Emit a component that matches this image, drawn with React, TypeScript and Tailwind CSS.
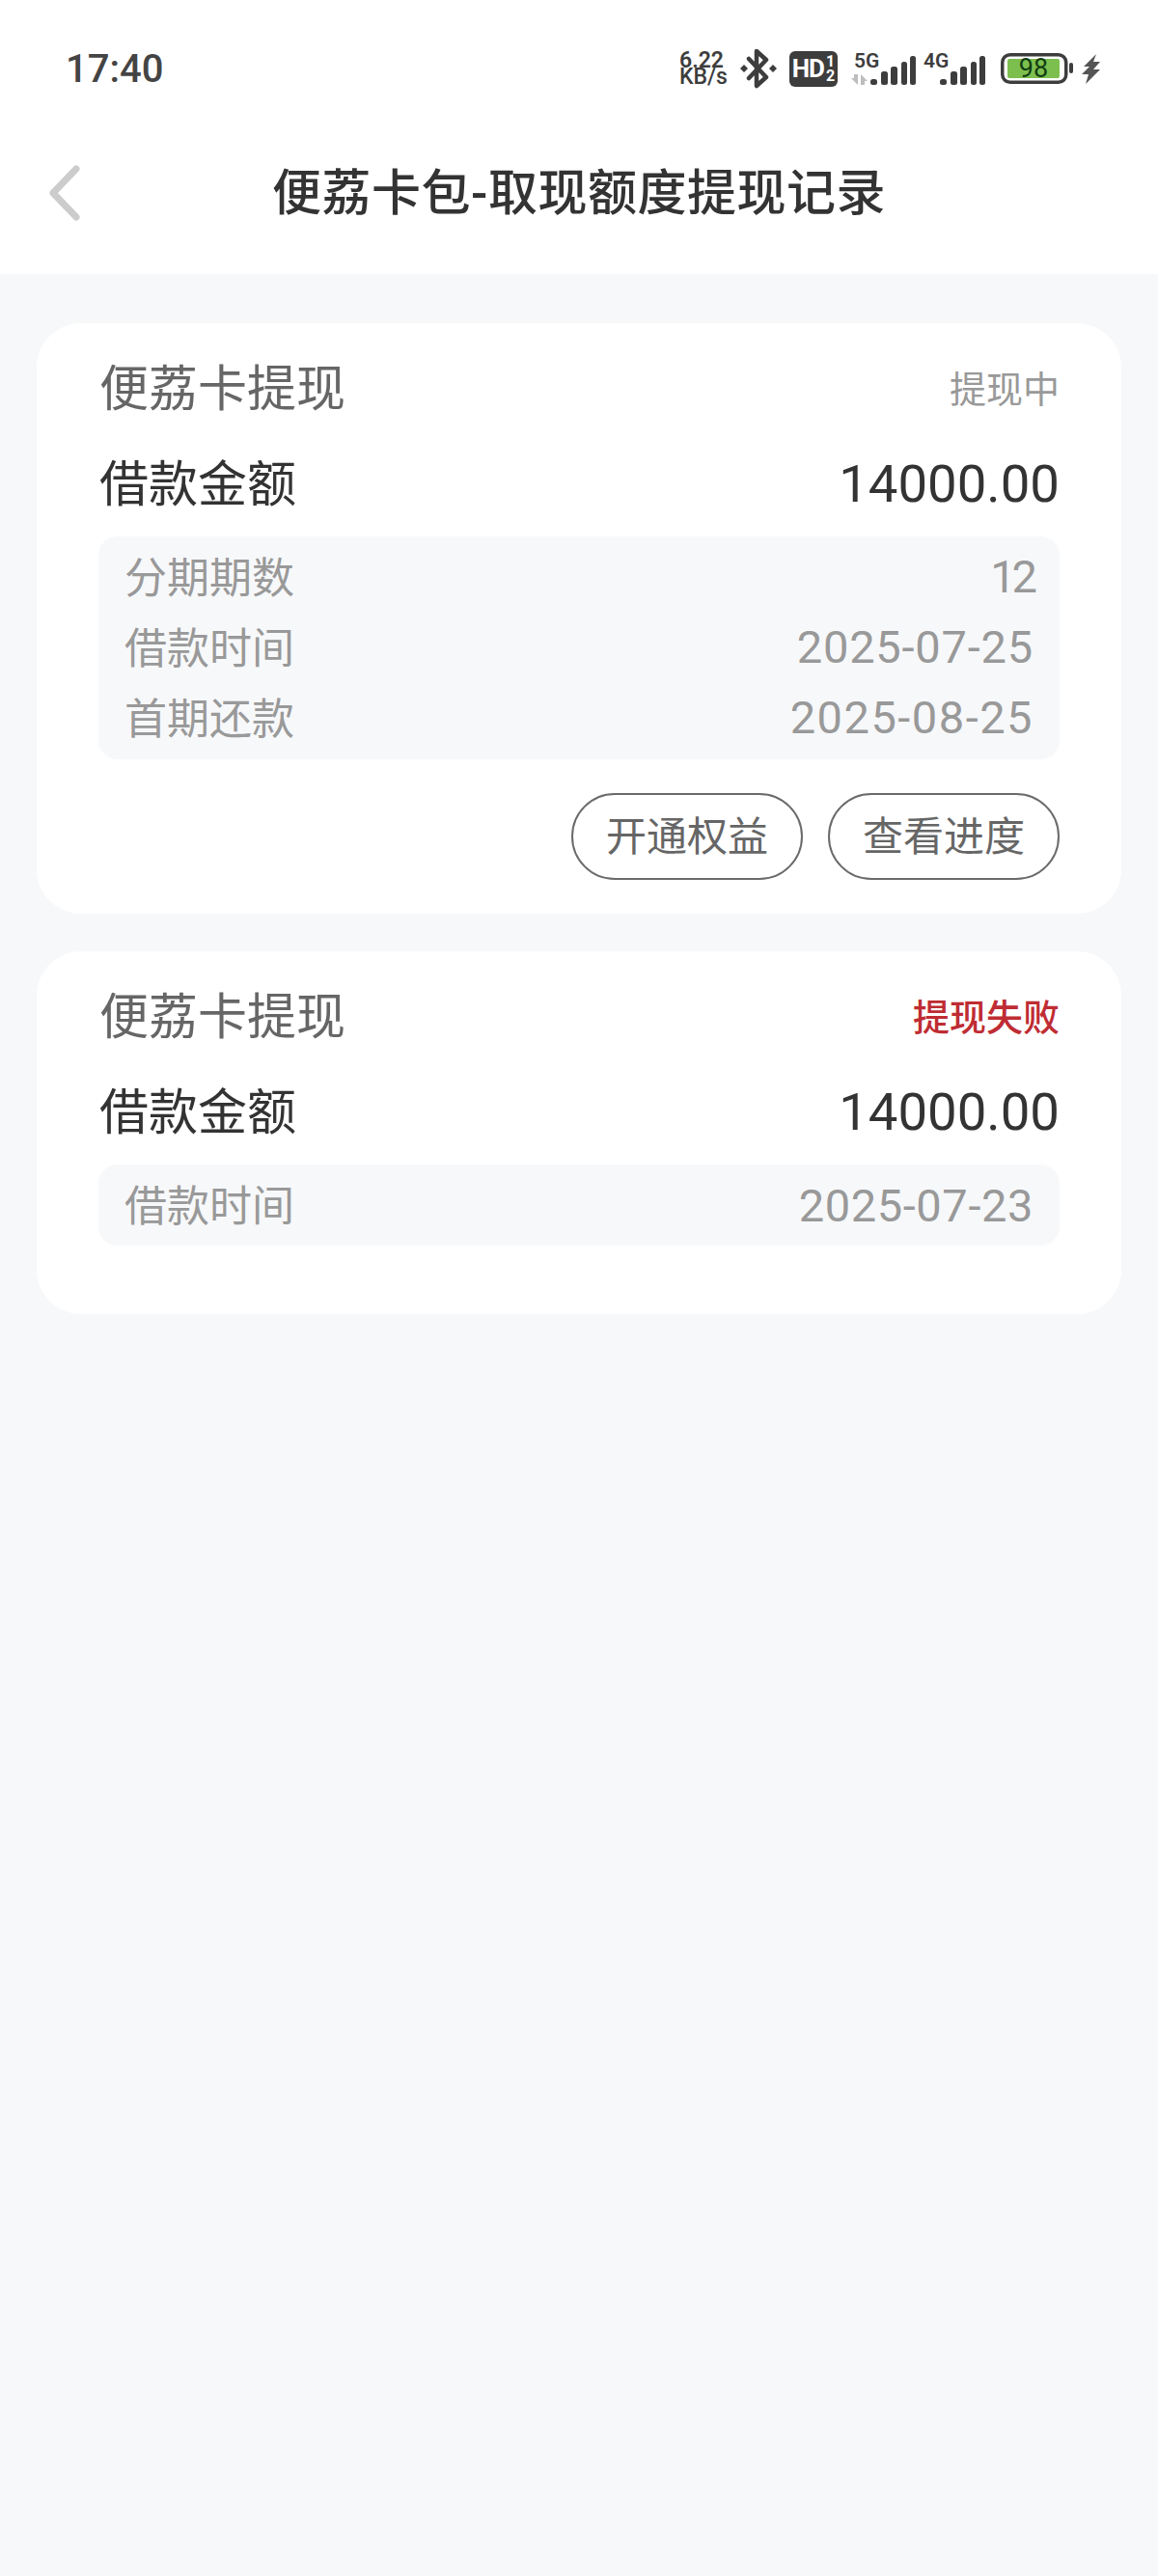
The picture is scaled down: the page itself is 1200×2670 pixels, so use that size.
import React from "react";

const bars = [
  [0, 24, 7, 6],
  [11, 16, 7, 14],
  [21, 11, 7, 19],
  [32, 6, 6, 24],
  [41, 0, 6, 30],
];

function SignalBars({ x }: { x: number }) {
  return (
    <g transform={`translate(${x} 7)`}>
      {bars.map(([bx, by, w, h]) => (
        <rect key={bx} x={bx} y={by} width={w} height={h} rx="2.5" fill="#3d3d3d" />
      ))}
    </g>
  );
}

function Signal5G() {
  return (
    <svg width="67" height="40" viewBox="0 0 67 40">
      <text x="3" y="19" fontSize="21" fontWeight="600" fill="#3d3d3d" fontFamily="Roboto, sans-serif">
        5G
      </text>
      <polygon points="0,30 3,30 3,26 7,26 7,37" fill="#bdbdbd" />
      <polygon points="10,37 10,26 17,33 14,33 14,37" fill="#bdbdbd" />
      <SignalBars x={20} />
    </svg>
  );
}

function Signal4G() {
  return (
    <svg width="65" height="40" viewBox="0 0 65 40">
      <text x="0" y="19" fontSize="21" fontWeight="600" fill="#3d3d3d" fontFamily="Roboto, sans-serif">
        4G
      </text>
      <SignalBars x={17} />
    </svg>
  );
}

function NetSpeed() {
  return (
    <svg width="56" height="46" viewBox="0 0 56 46">
      <text x="0" y="22" fontSize="23" fontWeight="600" fill="#3d3d3d" fontFamily="Roboto, sans-serif">
        6.22
      </text>
      <text x="0" y="39" fontSize="23" fontWeight="500" fill="#3d3d3d" fontFamily="Roboto, sans-serif">
        KB/s
      </text>
    </svg>
  );
}

function Bluetooth() {
  return (
    <svg width="38" height="42" viewBox="0 0 38 42">
      <path
        d="M9 11 L27 30 L17 39 L17 3 L27 12 L9 31"
        fill="none"
        stroke="#3d3d3d"
        strokeWidth="4.5"
        strokeLinejoin="round"
        strokeLinecap="round"
      />
      <polygon points="4,17 8,21 4,25 0,21" fill="#3d3d3d" />
      <polygon points="34,17 38,21 34,25 30,21" fill="#3d3d3d" />
    </svg>
  );
}

function Battery() {
  return (
    <svg width="75" height="32" viewBox="0 0 75 32">
      <rect x="1.75" y="1.75" width="66" height="28.5" rx="8" fill="#fff" stroke="#3d3d3d" strokeWidth="3.5" />
      <rect x="7" y="6" width="54" height="20" rx="2" fill="#7dbf4e" />
      <text x="34" y="25" textAnchor="middle" fontSize="27" fill="#123d12" fontFamily="Roboto, sans-serif">
        98
      </text>
      <rect x="71" y="10" width="4" height="11" rx="2" fill="#3d3d3d" />
    </svg>
  );
}

function Bolt() {
  return (
    <svg width="19" height="31" viewBox="0 0 19 31">
      <polygon points="15,0 2,13 8,13 0,21 7,21 4,31 19,16 12,16 19,8 12,8" fill="#555" />
    </svg>
  );
}

function StatusBar() {
  return (
    <div className="flex h-[142px] items-center pl-[68px] pr-[60px]">
      <span className="flex-1 pt-[2px] text-[40px] font-medium text-[#444444]">17:40</span>
      <div className="flex">
        <NetSpeed />
      </div>
      <div className="ml-[7px] flex">
        <Bluetooth />
      </div>
      <div className="ml-[13px] flex h-[37px] w-[50px] items-center justify-center rounded-[6px] bg-[#3d3d3d] text-white">
        <span className="text-[26px] font-bold leading-none tracking-[-1px]">HD</span>
        <span className="ml-[2px] flex flex-col text-[16px] font-bold leading-[15px]">
          <span>1</span>
          <span>2</span>
        </span>
      </div>
      <div className="ml-[14px] flex">
        <Signal5G />
      </div>
      <div className="ml-[8px] flex">
        <Signal4G />
      </div>
      <div className="ml-[15px] flex">
        <Battery />
      </div>
      <div className="ml-[9px] flex">
        <Bolt />
      </div>
    </div>
  );
}

function Header() {
  return (
    <div className="grid h-[142px] grid-cols-[1fr_auto_1fr] items-center pb-[26px]">
      <div className="pl-[50px]">
        <svg width="34" height="58" viewBox="0 0 34 58" className="block">
          <path
            d="M29 4 L5 29 L29 54"
            fill="none"
            stroke="#cccccc"
            strokeWidth="7"
            strokeLinecap="round"
            strokeLinejoin="round"
          />
        </svg>
      </div>
      <h1 className="text-[51px] font-medium leading-none tracking-[0.5px] text-[#333333]">
        便荔卡包-取现额度提现记录
      </h1>
      <div />
    </div>
  );
}

type Row = { label: string; value: string; valueClass: string };

function DetailRow({ row, height }: { row: Row; height: string }) {
  return (
    <div className={`flex items-center justify-between ${height}`}>
      <span className="pt-[4px] text-[44px] text-[#999999]">{row.label}</span>
      <span className={`pt-[2px] text-[47px] text-[#999999] ${row.valueClass}`}>{row.value}</span>
    </div>
  );
}

function RecordCard({
  status,
  statusClass,
  rows,
  actions,
}: {
  status: string;
  statusClass: string;
  rows: Row[];
  actions?: string[];
}) {
  return (
    <div className={`rounded-[46px] bg-white px-[64px] pt-[33px] ${actions ? "pb-[35px]" : "pb-[71px]"}`}>
      <div className="flex h-[68px] items-center justify-between">
        <span className="pl-[1px] pt-[5px] text-[51px] text-[#666666]">便荔卡提现</span>
        <span className={`pt-[5px] text-[38px] ${statusClass}`}>{status}</span>
      </div>
      <div className="mt-[33px] flex h-[66px] items-center justify-between">
        <span className="pl-[1px] pt-[3px] text-[51px] text-[#333333]">借款金额</span>
        <span className="text-[54.5px] text-[#333333]">14000.00</span>
      </div>
      <div
        className={`mt-[21px] rounded-[20px] bg-[#f7f8fa] px-[27px] ${rows.length > 1 ? "pb-[7px] pt-[5px]" : "py-[5px]"}`}
      >
        {rows.map((row) => (
          <DetailRow key={row.label} row={row} height={rows.length > 1 ? "h-[73px]" : "h-[74px]"} />
        ))}
      </div>
      {actions && (
        <div className="mt-[35px] flex justify-end gap-[26px]">
          {actions.map((a) => (
            <button
              key={a}
              className="h-[90px] w-[240px] rounded-full border-2 border-[#6b6b6b] text-[42px] text-[#666666]"
            >
              {a}
            </button>
          ))}
        </div>
      )}
    </div>
  );
}

export default function App() {
  return (
    <div className="min-h-[2670px] bg-[#f7f8fa] font-['Roboto','Noto_Sans_CJK_SC',sans-serif]">
      <div className="bg-white">
        <StatusBar />
        <Header />
      </div>
      <div className="flex flex-col gap-[39px] px-[38px] pt-[51px]">
        <RecordCard
          status="提现中"
          statusClass="text-[#999999]"
          rows={[
            { label: "分期期数", value: "12", valueClass: "tracking-[-4px]" },
            { label: "借款时间", value: "2025-07-25", valueClass: "tracking-[0.8px]" },
            { label: "首期还款", value: "2025-08-25", valueClass: "tracking-[1.5px]" },
          ]}
          actions={["开通权益", "查看进度"]}
        />
        <RecordCard
          status="提现失败"
          statusClass="font-medium text-[#bf2c33]"
          rows={[{ label: "借款时间", value: "2025-07-23", valueClass: "tracking-[0.6px]" }]}
        />
      </div>
    </div>
  );
}
